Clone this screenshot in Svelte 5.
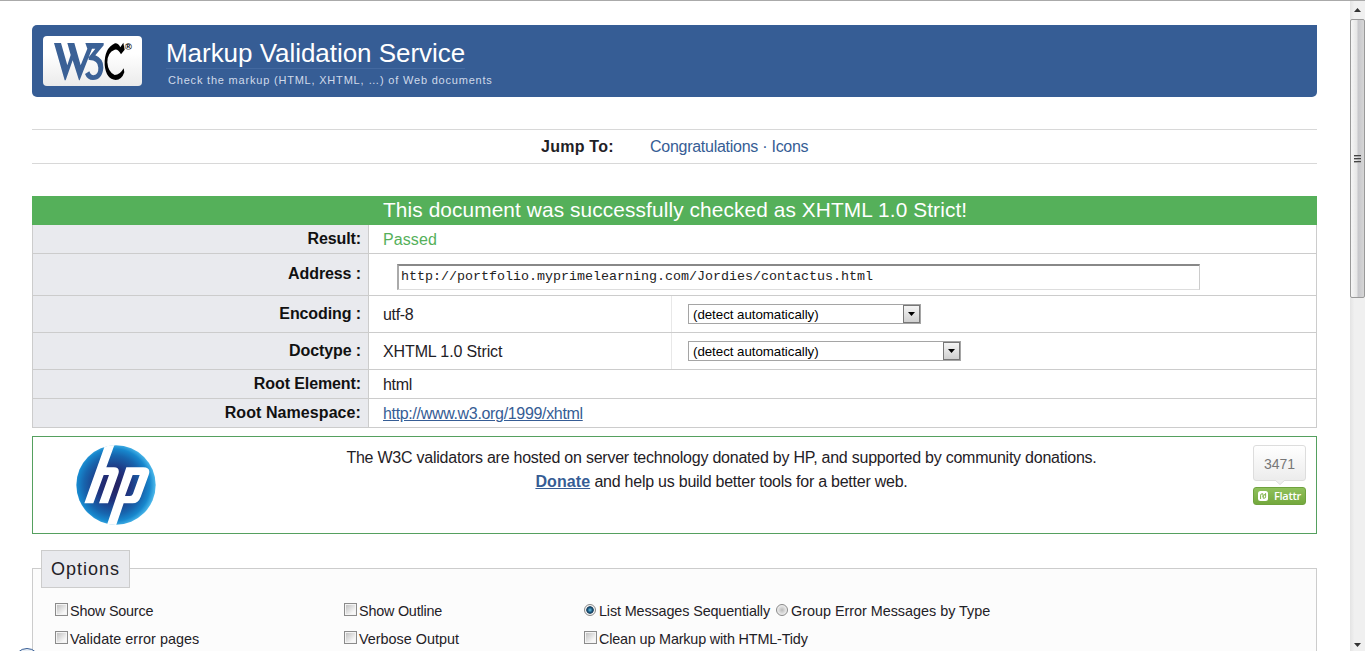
<script>
  const options = [
    [{ type: 'checkbox', label: 'Show Source', track: -0.22 }],
    [{ type: 'checkbox', label: 'Show Outline', track: -0.22 }],
    [
      { type: 'radio', label: 'List Messages Sequentially', on: true, track: -0.13 },
      { type: 'radio', label: 'Group Error Messages by Type', track: -0.02 }
    ],
    [{ type: 'checkbox', label: 'Validate error pages', track: 0.04 }],
    [{ type: 'checkbox', label: 'Verbose Output', track: 0 }],
    [{ type: 'checkbox', label: 'Clean up Markup with HTML-Tidy', track: -0.17 }]
  ];
</script>

<div class="window">
  <main>
    <header>
      <div class="logo">
        <svg viewBox="69 63 297 150" width="99" height="50" aria-label="W3C">
          <g fill="#3b6196">
            <path d="M102 84H123L142 151L152 120L142 84H163L182 151L202 101L196 84H251V91L226 121Q251 131 250 158Q247 194 219 195Q202 195 195 177L208 169Q212 181 221 181Q236 177 235 158Q234 134 206 135V127L226 101H216L179 196H177L158 136L137 196H134Z" />
          </g>
          <path d="M310 83L314 104L303 118Q294 101 284 104Q262 112 262 142Q264 172 284 180Q300 180 311 160L313 172Q305 195 287 195Q258 192 254 150Q252 100 285 85Q295 84 301 97Z" fill="#000" />
          <text x="314" y="105" font-size="29" font-weight="bold">®</text>
        </svg>
      </div>
      <div class="titles">
        <h1>Markup Validation Service</h1>
        <p>Check the markup (HTML, XHTML, …) of Web documents</p>
      </div>
    </header>

    <nav><strong>Jump To:</strong><span class="links"><a href="#c">Congratulations</a> · <a href="#i">Icons</a></span></nav>

    <section class="results">
      <h2>This document was successfully checked as XHTML 1.0 Strict!</h2>
      <div class="row r28"><b>Result:</b><div class="val passed"><span>Passed</span></div></div>
      <div class="row r41"><b>Address :</b><div class="val"><div class="address">http://portfolio.myprimelearning.com/Jordies/contactus.html</div></div></div>
      <div class="row r36"><b>Encoding :</b><div class="val split"><span class="tight">utf-8</span><div class="pick"><div class="select enc"><em>(detect automatically)</em><i><svg width="7" height="4"><path d="M0 0h7L3.5 4z" /></svg></i></div></div></div></div>
      <div class="row r36"><b>Doctype :</b><div class="val split"><span>XHTML 1.0 Strict</span><div class="pick"><div class="select doc"><em>(detect automatically)</em><i><svg width="7" height="4"><path d="M0 0h7L3.5 4z" /></svg></i></div></div></div></div>
      <div class="row r28"><b>Root Element:</b><div class="val"><span class="tight">html</span></div></div>
      <div class="row r28"><b class="wide">Root Namespace:</b><div class="val"><a class="tight" href="#x">http://www.w3.org/1999/xhtml</a></div></div>
    </section>

    <section class="donate">
      <svg class="hp" viewBox="168 60 240 240" width="80" height="80" aria-label="HP">
        <defs>
          <radialGradient id="ball" cx="0.47" cy="0.5" r="0.52">
            <stop offset="0" stop-color="#25205f" />
            <stop offset="0.38" stop-color="#20327d" />
            <stop offset="0.72" stop-color="#1765ae" />
            <stop offset="0.88" stop-color="#1787cd" />
            <stop offset="1" stop-color="#47b4e8" />
          </radialGradient>
          <clipPath id="disc"><circle cx="288" cy="180" r="120" /></clipPath>
        </defs>
        <circle cx="288" cy="180" r="119" fill="url(#ball)" />
        <g fill="#fff" clip-path="url(#disc)">
          <path d="M257 55H285L259 127H282Q301 128 295 147L264 235H237L267 150H251L220 235H193Z" />
          <path fill-rule="evenodd" d="M319 127H370Q394 128 386 150L362 216Q355 235 338 235H311L287 305H259ZM338 150L315 213H330Q336 213 339 206L359 150Z" />
        </g>
      </svg>
      <p><span class="l1">The W3C validators are hosted on server technology donated by HP, and supported by community donations.</span><br /><span class="l2"><a href="#d">Donate</a> and help us build better tools for a better web.</span></p>
      <div class="flattr">
        <div class="count">3471</div>
        <svg class="tip" width="12" height="6"><path d="M1 0L6 4.5L11 0" fill="#f0f0f0" stroke="#ddd" /></svg>
        <div class="btn">
          <svg width="10" height="10"><rect width="10" height="10" rx="2.5" fill="#fff" /><path d="M2.6 8V4.2Q2.6 2.8 4 2.8H5V5.6L7.6 2.4V5.8Q7.6 7.2 6.2 7.2H5.2V5" fill="none" stroke="#7fb249" stroke-width="1" /></svg>
          <span>Flattr</span>
        </div>
      </div>
    </section>

    <section class="options">
      <h3>Options</h3>
      <div class="grid">
        {#each options as cell}
          <div class="cell">
            {#each cell as item}
              <label><span class={item.type} class:on={item.on}></span><span style="letter-spacing: {item.track}px">{item.label}</span></label>
            {/each}
          </div>
        {/each}
      </div>
    </section>
    <span class="corner"></span>
  </main>

  <aside>
    <div class="arrow"><svg width="7" height="4"><path d="M0 4h7L3.5 0z" fill="#333" /></svg></div>
    <div class="thumb"><u></u><u></u><u></u></div>
    <div class="arrow down"><svg width="7" height="4"><path d="M0 0h7L3.5 4z" fill="#333" /></svg></div>
  </aside>
</div>

<style>
  :global(body) { margin: 0; background: #fff; overflow: hidden; }
  * { box-sizing: border-box; }
  .window { display: flex; width: 1365px; height: 651px; overflow: hidden; border-top: 1px solid #aaa; font: 16px/24px "Liberation Sans", Arial, sans-serif; color: #1f2126; }
  main { position: relative; width: 1350px; padding: 24px 33px 0 32px; }
  h1, h2, h3, p { margin: 0; font-weight: normal; }
  a { color: #365d95; }
  header { display: flex; height: 72px; background: #365d95; border-radius: 5px 0 5px 5px; padding: 11px; }
  .logo { width: 99px; height: 50px; border-radius: 4px; background: linear-gradient(#fff 35%, #ebebeb); }
  .logo svg { display: block; }
  .titles { padding-left: 24px; color: #fff; }
  h1 { width: 299px; height: 33px; font-size: 26px; line-height: 34px; letter-spacing: -0.04px; border-bottom: 1px solid #4369a0; white-space: nowrap; }
  .titles p { padding-left: 2px; font-size: 11px; line-height: 22px; letter-spacing: 0.8px; color: #d0daea; white-space: nowrap; }
  nav { display: flex; height: 35px; margin-top: 32px; border: solid #d8d8d8; border-width: 1px 0; line-height: 33px; padding-left: 509px; }
  nav strong { width: 109px; letter-spacing: 0.25px; }
  nav a { text-decoration: none; }
  .links { white-space: nowrap; color: #365d95; letter-spacing: -0.27px; }
  .results { margin-top: 32px; }
  h2 { height: 29px; padding-left: 351px; background: #55b05a; color: #fff; font-size: 20.8px; letter-spacing: 0.12px; line-height: 28px; }
  .row { display: flex; border: solid #ccc; border-width: 0 1px 1px; }
  .r28 { height: 29px; line-height: 28px; }
  .r41 { height: 42px; line-height: 39px; }
  .r36 { height: 37px; line-height: 36px; }
  .row b { width: 336px; padding-right: 7px; text-align: right; letter-spacing: -0.1px; color: #111; background: #e9eaee; border-right: 1px solid #ccc; }
  .row .wide { letter-spacing: 0.08px; }
  .val { flex: 1; display: flex; align-items: center; padding-left: 14px; }
  .val > span, .val > a { padding-top: 2px; letter-spacing: -0.12px; }
  .val > .tight { letter-spacing: -0.33px; }
  .val.passed { color: #55b05a; }
  .val.passed span { letter-spacing: 0.1px; }
  .split > span { width: 288px; }
  .pick { align-self: stretch; flex: 1; display: flex; align-items: center; padding-left: 16px; border-left: 1px solid #e8e8e8; }
  .address { width: 803px; height: 26px; margin: 4px 0 0 14px; padding-left: 2px; border: 2px solid; border-width: 2px 1px 1px 2px; border-color: #888 #ccc #ddd #aaa; font: 13.33px/22px "Liberation Mono", monospace; color: #222; }
  .select { display: flex; justify-content: space-between; height: 20px; border: 1px solid #a5a5a5; padding-left: 4px; }
  .select em { font-style: normal; font-size: 13.33px; letter-spacing: -0.05px; line-height: 19px; color: #000; }
  .select i { width: 17px; height: 18px; display: flex; align-items: center; justify-content: center; border: 1px solid #777; background: linear-gradient(#f4f4f4, #d0d0d0); }
  .enc { width: 233px; }
  .doc { width: 273px; }
  .donate { display: flex; height: 98px; margin-top: 8px; border: 1px solid #55a05f; padding: 8px 10px 0 43px; }
  .donate p { flex: 1; text-align: center; padding: 1px 0 0 34px; white-space: nowrap; }
  .l1 { letter-spacing: -0.235px; }
  .l2 { letter-spacing: -0.24px; }
  .donate a { font-weight: bold; letter-spacing: 0.1px; }
  .flattr { width: 53px; display: flex; flex-direction: column; align-items: center; }
  .count { width: 53px; height: 36px; border: 1px solid #ddd; border-radius: 3px; background: linear-gradient(#fff, #ececec); text-align: center; font-size: 14px; line-height: 37px; color: #777; }
  .tip { margin-top: -1px; height: 7px; }
  .btn { width: 53px; height: 18px; display: flex; align-items: center; gap: 6px; padding-left: 4px; border: 1px solid #6fa23e; border-radius: 3px; background: linear-gradient(#8fc05c, #74a83d); color: #fff; font: 600 11px/16px "Open Sans", sans-serif; letter-spacing: -0.3px; }
  .options { height: 120px; margin-top: 34px; border: 1px solid #ccc; background: #fcfcfc; }
  h3 { width: 89px; height: 38px; margin: -19px 0 0 8px; border: 1px solid #ccc; background: #e9eaee; font-size: 18px; line-height: 36px; padding-left: 9px; letter-spacing: 1px; }
  .grid { display: grid; grid-template-columns: 289px 240px 1fr; padding: 9px 0 0 22px; font-size: 14.4px; line-height: 28px; }
  .cell { display: flex; white-space: nowrap; height: 28px; }
  label { display: flex; margin-right: 6px; }
  .checkbox { width: 13px; height: 13px; margin: 6px 2px 0 0; border: 1px solid #8b8b8b; background: linear-gradient(135deg, #bbb, #f7f7f7 75%); box-shadow: inset 0 0 0 1px #f4f4f4; }
  .radio { width: 12px; height: 12px; margin: 7px 3px 0 0; border: 1px solid #888; border-radius: 50%; background: radial-gradient(circle, #bbb, #f3f3f3 75%); }
  .radio.on { background: radial-gradient(circle, #6dc7e8 0, #155078 35%, #183c58 48%, #f4f4f4 58%); }
  .corner { position: absolute; left: 14px; top: 647px; width: 26px; height: 26px; border: 1px solid #365d95; border-radius: 50%; background: #e8eef5; }
  aside { width: 15px; display: flex; flex-direction: column; background: linear-gradient(90deg, #e4e4e4, #f0f0f0 30%); }
  .arrow { height: 18px; display: flex; align-items: center; justify-content: center; }
  .thumb { height: 279px; display: flex; flex-direction: column; align-items: center; justify-content: center; gap: 2px; border: 1px solid #999; border-radius: 2px; background: linear-gradient(90deg, #f6f6f6, #e6e6e6 45%, #c7c7cb 55%, #d6d6d6); }
  .thumb u { width: 7px; height: 1px; background: #444; box-shadow: 0 1px #aaa; }
  .down { margin-top: auto; height: 12px; }
</style>
